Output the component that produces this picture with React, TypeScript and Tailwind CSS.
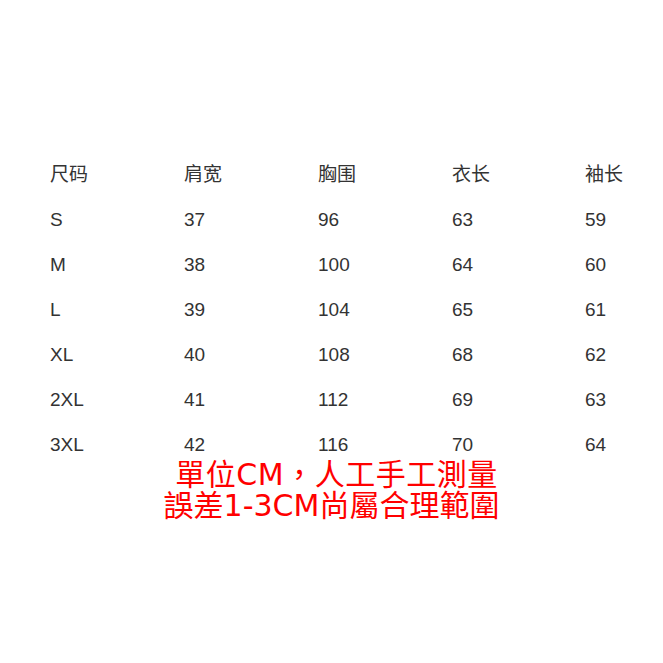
import React from "react";

const rows = [
  ["尺码", "肩宽", "胸围", "衣长", "袖长"],
  ["S", "37", "96", "63", "59"],
  ["M", "38", "100", "64", "60"],
  ["L", "39", "104", "65", "61"],
  ["XL", "40", "108", "68", "62"],
  ["2XL", "41", "112", "69", "63"],
  ["3XL", "42", "116", "70", "64"],
];

export default function App() {
  return (
    <div className="w-[663px] h-[663px] bg-white pt-[153px]">
      <div
        className="pl-[50px] text-[19px] text-[#333333]"
        style={{ fontFamily: '"Liberation Sans", "Noto Sans CJK SC", sans-serif' }}
      >
        {rows.map((row, i) => (
          <div key={i} className="grid grid-cols-[134px_134px_134px_133px_100px] h-[45px] items-center">
            {row.map((cell, j) => (
              <span key={j}>{cell}</span>
            ))}
          </div>
        ))}
      </div>
      <div
        className="-mt-[9px] text-center text-[30px] leading-[31px] text-[#ff0000]"
        style={{ fontFamily: '"DejaVu Sans", "Noto Sans CJK TC", sans-serif' }}
      >
        <div className="pl-[10px] tracking-[0.5px]">單位CM，人工手工測量</div>
        <div>誤差1-3CM尚屬合理範圍</div>
      </div>
    </div>
  );
}
